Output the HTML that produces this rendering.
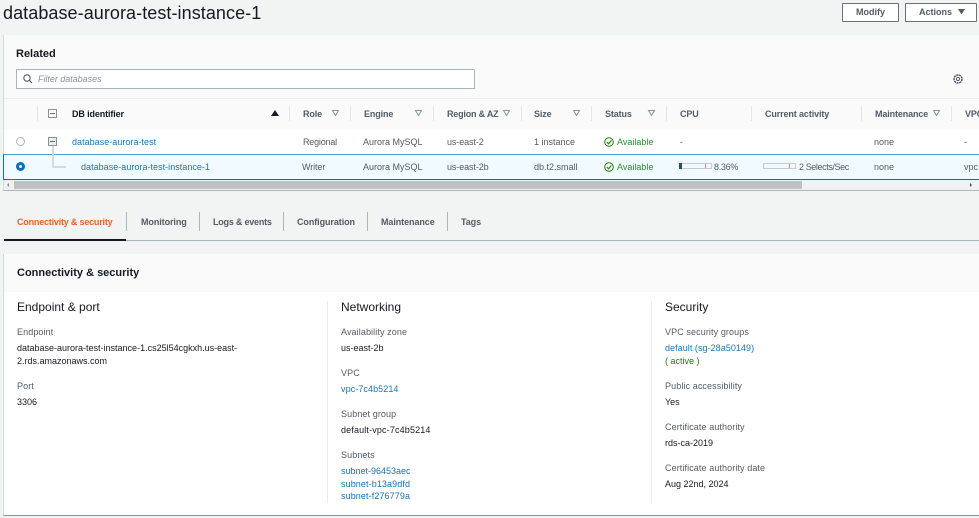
<!DOCTYPE html>
<html><head><meta charset="utf-8"><style>
html,body{margin:0;padding:0}
body{width:979px;height:518px;overflow:hidden;position:relative;background:#f2f3f3;font-family:"Liberation Sans",sans-serif;color:#16191f}
.a{position:absolute;white-space:nowrap}
.t{font-size:9px;line-height:12px;letter-spacing:0}
.h{font-size:9px;line-height:12px;font-weight:bold;color:#545b64;letter-spacing:-.12px}
.g{color:#545b64}
.s{position:absolute;width:1px;background:#e4e7e7;top:106px;height:15px}
.tb{font-size:9px;line-height:12px;font-weight:bold;color:#545b64;top:216px;letter-spacing:-.08px}
.ts{position:absolute;width:1px;background:#aab7b8;top:212px;height:19px}
.b{position:absolute;background:#fff;border:1px solid #687078;box-sizing:border-box;font-size:9px;font-weight:bold;color:#545b64;text-align:center;height:19px;line-height:17px;top:3px;border-radius:1px}
.k{font-size:9px;line-height:12px;color:#545b64;letter-spacing:.1px}
.v{font-size:9px;line-height:12px;color:#16191f;letter-spacing:0}
.l{color:#1b75b5}
.sec{font-size:12px;line-height:14px;color:#16191f}
.tri{fill:none;stroke:#879596;stroke-width:1}
.bar{position:absolute;top:163px;width:33px;height:6px;box-sizing:border-box;border:1px solid #c4cdd0;background:#f4f8fa}
</style></head><body>
<div class="a" style="left:3px;top:1px;font-size:18px;line-height:24px;color:#16191f;letter-spacing:.07px">database-aurora-test-instance-1</div>
<div class="b" style="left:842px;width:57px">Modify</div>
<div class="b" style="left:905px;width:72px;text-align:left;padding-left:13px">Actions<svg style="position:absolute;left:52px;top:5px" width="7" height="6"><path d="M0 0H7L3.500 5.500Z" fill="#545b64"/></svg></div>

<div class="a" style="left:3px;top:35px;width:976px;height:156px;background:#fafafa;border-left:1px solid #d5dbdb;box-sizing:border-box;border-bottom:1px solid #aab7b8"></div>
<div class="a" style="left:16px;top:47px;font-size:11px;line-height:14px;font-weight:bold;color:#16191f">Related</div>
<div class="a" style="left:16px;top:69px;width:459px;height:20px;box-sizing:border-box;background:#fff;border:1px solid #aab7b8"></div>
<svg class="a" style="left:23px;top:74px" width="10" height="10"><circle cx="4" cy="4" r="3.200" fill="none" stroke="#545b64" stroke-width="1.100"/><path d="M6.300 6.300L9 9" stroke="#545b64" stroke-width="1.200"/></svg>
<div class="a" style="left:38px;top:73px;font-size:9px;line-height:12px;font-style:italic;color:#879596;letter-spacing:-.03px">Filter databases</div>
<svg class="a" style="left:953px;top:74px" width="10" height="10"><circle cx="5" cy="5" r="4" fill="none" stroke="#545b64" stroke-width="1.500" stroke-dasharray="2.200 .6"/><circle cx="5" cy="5" r="1.600" fill="none" stroke="#545b64"/></svg>

<div class="a" style="left:4px;top:98px;width:975px;height:1px;background:#eaeded"></div>
<div class="s" style="left:37px"></div><div class="s" style="left:289px"></div><div class="s" style="left:350px"></div><div class="s" style="left:433px"></div><div class="s" style="left:521px"></div><div class="s" style="left:591px"></div><div class="s" style="left:666px"></div><div class="s" style="left:751px"></div><div class="s" style="left:861px"></div><div class="s" style="left:951px"></div>
<div class="a" style="left:48px;top:109px;width:9px;height:9px;box-sizing:border-box;border:1px solid #879596;background:#fafafa"><div style="position:absolute;left:1px;top:3px;width:5px;height:1px;background:#687078"></div></div>
<div class="a h" style="left:72px;top:108px;color:#16191f">DB identifier</div>
<svg class="a" style="left:271px;top:110px" width="8" height="6"><path d="M0 6H8L4 0Z" fill="#16191f"/></svg>
<div class="a h" style="left:303px;top:108px">Role</div>
<div class="a h" style="left:364px;top:108px">Engine</div>
<div class="a h" style="left:447px;top:108px;letter-spacing:-.2px">Region &amp; AZ</div>
<div class="a h" style="left:534px;top:108px">Size</div>
<div class="a h" style="left:605px;top:108px">Status</div>
<div class="a h" style="left:680px;top:108px">CPU</div>
<div class="a h" style="left:765px;top:108px">Current activity</div>
<div class="a h" style="left:875px;top:108px">Maintenance</div>
<div class="a h" style="left:965px;top:108px">VPC</div>
<svg class="a" style="left:0;top:110px" width="979" height="7"><g class="tri"><path d="M332.500 .5h6l-3 5z"/><path d="M415.500 .5h6l-3 5z"/><path d="M503.500 .5h6l-3 5z"/><path d="M573.500 .5h6l-3 5z"/><path d="M648.500 .5h6l-3 5z"/><path d="M933.500 .5h6l-3 5z"/></g></svg>

<div class="a" style="left:4px;top:129px;width:975px;height:26px;background:#fff"></div>
<div class="a" style="left:3px;top:154px;width:976px;height:26px;box-sizing:border-box;background:#f1faff;border:1px solid #0073bb;border-top-color:#44a0cf;border-right:0"></div>
<div class="a" style="left:16px;top:137px;width:9px;height:9px;box-sizing:border-box;border:1px solid #aab7b8;border-radius:50%;background:#fff"></div>
<div class="a" style="left:16px;top:162px;width:9px;height:9px;box-sizing:border-box;border:3px solid #0073bb;border-radius:50%;background:#fff"></div>
<div class="a" style="left:48px;top:137px;width:9px;height:9px;box-sizing:border-box;border:1px solid #879596;background:#eaeded"><div style="position:absolute;left:1px;top:3px;width:5px;height:1px;background:#687078"></div></div>
<div class="a" style="left:52px;top:146px;width:2px;height:20px;background:#d5dbdb"></div>
<div class="a" style="left:52px;top:166px;width:14px;height:2px;background:#d5dbdb"></div>

<div class="a t l" style="left:72px;top:136px;letter-spacing:.03px">database-aurora-test</div>
<div class="a t l" style="left:81px;top:161px;letter-spacing:.03px">database-aurora-test-instance-1</div>
<div class="a t g" style="left:303px;top:136px;letter-spacing:-.2px">Regional</div><div class="a t g" style="left:302px;top:161px;letter-spacing:-.1px">Writer</div>
<div class="a t g" style="left:363px;top:136px">Aurora MySQL</div><div class="a t g" style="left:363px;top:161px">Aurora MySQL</div>
<div class="a t g" style="left:447px;top:136px;letter-spacing:-.1px">us-east-2</div><div class="a t g" style="left:447px;top:161px;letter-spacing:-.1px">us-east-2b</div>
<div class="a t g" style="left:534px;top:136px">1 instance</div><div class="a t g" style="left:534px;top:161px">db.t2.small</div>
<svg class="a" style="left:604px;top:137px" width="10" height="10"><circle cx="5" cy="5" r="4.300" fill="#fff" stroke="#1d8102" stroke-width="1"/><path d="M2.800 5L4.500 6.800L7.400 3.500" fill="none" stroke="#1d8102" stroke-width="1.100"/></svg>
<svg class="a" style="left:604px;top:162px" width="10" height="10"><circle cx="5" cy="5" r="4.300" fill="#fff" stroke="#1d8102" stroke-width="1"/><path d="M2.800 5L4.500 6.800L7.400 3.500" fill="none" stroke="#1d8102" stroke-width="1.100"/></svg>
<div class="a t" style="left:617px;top:136px;color:#2f8f2f">Available</div><div class="a t" style="left:617px;top:161px;color:#2f8f2f">Available</div>
<div class="a t g" style="left:680px;top:136px">-</div>
<div class="bar" style="left:679px"><div style="position:absolute;left:-1px;top:-1px;width:3px;height:6px;background:#1f4e79"></div><div style="position:absolute;left:25px;top:0;width:1px;height:4px;background:#d98a80"></div></div>
<div class="a t g" style="left:714px;top:161px;letter-spacing:-.3px">8.36%</div>
<div class="bar" style="left:763px"><div style="position:absolute;left:25px;top:0;width:1px;height:4px;background:#d98a80"></div></div>
<div class="a t g" style="left:799px;top:161px;letter-spacing:-.4px">2 Selects/Sec</div>
<div class="a t g" style="left:874px;top:136px">none</div><div class="a t g" style="left:874px;top:161px">none</div>
<div class="a t g" style="left:964px;top:136px">-</div><div class="a t g" style="left:964px;top:161px">vpc</div>

<div class="a" style="left:4px;top:180px;width:975px;height:10px;background:#f1f1f1"></div>
<div class="a" style="left:14px;top:181px;width:788px;height:8px;background:#c1c1c1"></div>
<svg class="a" style="left:0;top:181px" width="979" height="8"><path d="M9 2v4l-2-2z" fill="#8a8a8a"/><path d="M970 2v4l2-2z" fill="#505050"/></svg>

<div class="a tb" style="left:17px;color:#e9622b;letter-spacing:-.2px">Connectivity &amp; security</div>
<div class="a tb" style="left:141px">Monitoring</div>
<div class="a tb" style="left:213px;letter-spacing:-.22px">Logs &amp; events</div>
<div class="a tb" style="left:297px">Configuration</div>
<div class="a tb" style="left:381px">Maintenance</div>
<div class="a tb" style="left:461px">Tags</div>
<div class="ts" style="left:126px"></div><div class="ts" style="left:199px"></div><div class="ts" style="left:283px"></div><div class="ts" style="left:367px"></div><div class="ts" style="left:447px"></div>
<div class="a" style="left:4px;top:240px;width:975px;height:1px;background:#aab7b8"></div>
<div class="a" style="left:4px;top:239px;width:122px;height:2px;background:#16191f"></div>

<div class="a" style="left:3px;top:254px;width:976px;height:262px;box-sizing:border-box;background:#fff;border-left:1px solid #d5dbdb;border-bottom:1px solid #879596"></div>
<div class="a" style="left:4px;top:254px;width:975px;height:38px;background:#fafafa"></div>
<div class="a" style="left:17px;top:266px;font-size:11px;line-height:14px;font-weight:bold;color:#16191f">Connectivity &amp; security</div>
<div class="a" style="left:327px;top:301px;width:1px;height:202px;background:#eaeded"></div>
<div class="a" style="left:651px;top:301px;width:1px;height:202px;background:#eaeded"></div>

<div class="a sec" style="left:17px;top:300px">Endpoint &amp; port</div>
<div class="a k" style="left:17px;top:326px">Endpoint</div>
<div class="a v" style="left:17px;top:342px">database-aurora-test-instance-1.cs25l54cgkxh.us-east-</div>
<div class="a v" style="left:17px;top:355px">2.rds.amazonaws.com</div>
<div class="a k" style="left:17px;top:380px">Port</div>
<div class="a v" style="left:17px;top:396px">3306</div>

<div class="a sec" style="left:341px;top:300px">Networking</div>
<div class="a k" style="left:341px;top:326px">Availability zone</div>
<div class="a v" style="left:341px;top:342px">us-east-2b</div>
<div class="a k" style="left:341px;top:367px">VPC</div>
<div class="a v l" style="left:341px;top:383px;letter-spacing:.08px">vpc-7c4b5214</div>
<div class="a k" style="left:341px;top:408px">Subnet group</div>
<div class="a v" style="left:341px;top:424px;letter-spacing:.15px">default-vpc-7c4b5214</div>
<div class="a k" style="left:341px;top:449px">Subnets</div>
<div class="a v l" style="left:341px;top:465px">subnet-96453aec</div>
<div class="a v l" style="left:341px;top:478px;letter-spacing:.1px">subnet-b13a9dfd</div>
<div class="a v l" style="left:341px;top:490px;letter-spacing:.1px">subnet-f276779a</div>

<div class="a sec" style="left:665px;top:300px">Security</div>
<div class="a k" style="left:665px;top:326px">VPC security groups</div>
<div class="a v l" style="left:665px;top:342px;letter-spacing:.05px">default (sg-28a50149)</div>
<div class="a v" style="left:665px;top:355px;color:#1d8102">( active )</div>
<div class="a k" style="left:665px;top:380px">Public accessibility</div>
<div class="a v" style="left:665px;top:396px">Yes</div>
<div class="a k" style="left:665px;top:421px">Certificate authority</div>
<div class="a v" style="left:665px;top:437px">rds-ca-2019</div>
<div class="a k" style="left:665px;top:462px">Certificate authority date</div>
<div class="a v" style="left:665px;top:478px">Aug 22nd, 2024</div>
</body></html>
